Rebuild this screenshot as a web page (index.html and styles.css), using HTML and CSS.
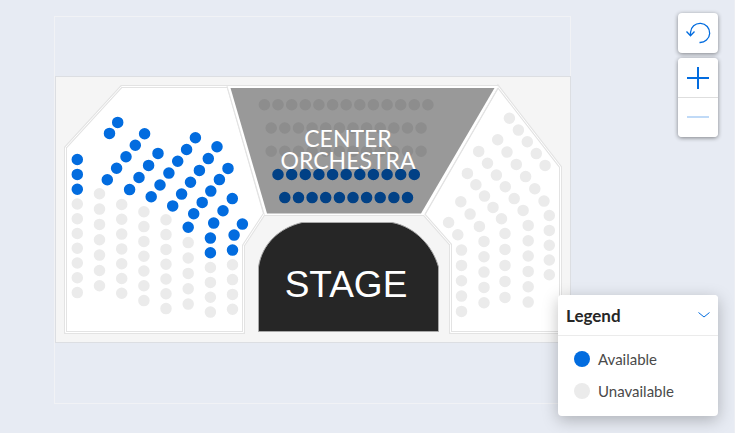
FILE: index.html
```html
<!DOCTYPE html>
<html lang="en">
<head>
<meta charset="utf-8">
<meta name="viewport" content="width=device-width, initial-scale=1">
<title>Seat map</title>
<link rel="stylesheet" href="styles.css">
</head>
<body>
<main class="viewer">
  <svg class="map" viewBox="0 0 735 433" role="img" aria-label="Venue seat map">
    <rect class="frame" x="54.5" y="16.5" width="516" height="387"/>
    <rect class="venue" x="55.5" y="76.5" width="515" height="266"/>

    <!-- side sections: a wide grey outline with a white one inside it -->
    <g class="section-edge">
      <path id="left" d="M65.5 147.5L121.5 86.5H228L264.5 213.5L243.5 245.5V332.5H65.5Z"/>
      <path id="right" d="M498 86.5L560.5 167V332.5H450.5V244.5L424 214.5Z"/>
    </g>
    <g class="section-fill">
      <use href="#left"/>
      <use href="#right"/>
    </g>

    <!-- centre section -->
    <path class="center-gap" d="M227 86H498L424 215H265Z"/>
    <path class="center-line" d="M226 85.5H498M264 215.5H424M227 86L264 214M498 88L425 214"/>
    <path class="center" d="M230.5 88H494.5L421 213.5H267Z"/>

    <path class="stage" d="M258.5 331.5V267C262 244 279 228 302 222.5H392C416 227 433 247 438.5 267V331.5Z"/>
    <text class="stage-label" x="346" y="297">STAGE</text>

    <g class="seats available" stroke-width="11.5">
      <path d="M77.3 159.5h0M77.3 174.4h0M77.3 189.2h0M117.7 122.4h0M109.5 133.4h0"/>
      <path d="M144.6 133.7h0M135.3 145.3h0M126 156.7h0M116.6 168.3h0M107.3 179.8h0"/>
      <path d="M158 153.4h0M148.6 165.4h0M139 177.5h0M129.6 189.6h0"/>
      <path d="M195.4 137.7h0M186.6 149.5h0M177.7 161.3h0M168.9 173.1h0M160 185h0M151.2 196.8h0"/>
      <path d="M217 146.8h0M208.3 158.6h0M199.4 170.4h0M190.5 182.3h0M181.6 194.1h0M172.7 205.9h0"/>
      <path d="M228 168.4h0M219.4 179.6h0M210.8 191.1h0M202.2 202.4h0M193.7 213.8h0M188.2 227.3h0"/>
      <path d="M232.3 198.6h0M223 210.8h0M213.7 223.1h0M210.4 238.1h0M210.4 252.8h0"/>
      <path d="M242.4 224.1h0M234.1 235.1h0M232.5 250.1h0"/>
    </g>
    <g class="seats unavailable" stroke-width="11.5">
      <path d="M77.3 204h0M77.3 218.7h0M77.3 233.5h0M77.3 248.3h0M77.3 263h0M77.3 277.8h0M77.3 292.6h0"/>
      <path d="M99.5 193.7h0M99.5 209.1h0M99.5 224.4h0M99.5 239.8h0M99.5 255.1h0M99.5 270.5h0M99.5 285.8h0"/>
      <path d="M121.7 204.5h0M121.7 219.3h0M121.7 234.1h0M121.7 248.9h0M121.7 263.7h0M121.7 278.5h0M121.7 293.3h0"/>
      <path d="M143.9 211.8h0M143.9 226.6h0M143.9 241.4h0M143.9 256.2h0M143.9 271h0M143.9 285.8h0M143.9 300.6h0"/>
      <path d="M166 219.8h0M166 234.6h0M166 249.4h0M166 264.2h0M166 279h0M166 293.8h0M166 308.6h0"/>
      <path d="M188.2 242.6h0M188.2 258h0M188.2 273.4h0M188.2 288.7h0M188.2 304.1h0"/>
      <path d="M210.4 267.5h0M210.4 282.4h0M210.4 297.3h0M210.4 312.1h0"/>
      <path d="M232.5 264.8h0M232.5 279.6h0M232.5 294.4h0M232.5 309.2h0"/>

      <path d="M509.4 118.3h0M518.4 130.1h0M527.3 141.8h0M536.3 153.6h0M545.1 165.4h0"/>
      <path d="M497.7 139.8h0M507 152.1h0M516.3 164.4h0M525.6 176.6h0M534.8 188.8h0M544 201.1h0"/>
      <path d="M549.3 215.5h0M549.3 230.4h0M549.3 245.2h0M549.3 260h0M549.3 274.7h0"/>
      <path d="M478.7 151.4h0M487.5 163.3h0M496.4 175.1h0M505.3 186.8h0M514.2 198.6h0M523.1 210.4h0"/>
      <path d="M528.2 225.4h0M528.2 240.7h0M528.2 256h0M528.2 271.4h0M528.2 286.7h0M528.2 302.1h0"/>
      <path d="M467.4 173.4h0M475.9 184.7h0M484.5 196.1h0M493 207.4h0M501.5 218.7h0"/>
      <path d="M505 233.5h0M505 249.4h0M505 265.4h0M505 281.4h0M505 297.4h0"/>
      <path d="M460.8 201.7h0M470.1 214.1h0M479.4 226.4h0"/>
      <path d="M484 241.4h0M484 256.7h0M484 272.1h0M484 287.4h0M484 302.7h0"/>
      <path d="M448.6 222.5h0M457.8 234.7h0"/>
      <path d="M461.5 250.1h0M461.5 265.4h0M461.5 280.7h0M461.5 296.1h0M461.5 311.4h0"/>
    </g>
    <g class="seats center-unavailable" stroke-width="11.5">
      <path d="M264.4 104.8h0M278 104.8h0M291.7 104.8h0M305.3 104.8h0M318.9 104.8h0M332.6 104.8h0M346.2 104.8h0M359.8 104.8h0M373.4 104.8h0M387.1 104.8h0M400.7 104.8h0M414.3 104.8h0M427.9 104.8h0"/>
      <path d="M271.2 128h0M284.8 128h0M298.5 128h0M312.1 128h0M325.7 128h0M339.4 128h0M353 128h0M366.6 128h0M380.2 128h0M393.9 128h0M407.5 128h0M421.1 128h0"/>
      <path d="M271.2 151.3h0M284.8 151.3h0M298.5 151.3h0M312.1 151.3h0M325.7 151.3h0M339.4 151.3h0M353 151.3h0M366.6 151.3h0M380.2 151.3h0M393.9 151.3h0M407.5 151.3h0M421.1 151.3h0"/>
    </g>
    <g class="seats center-available" stroke-width="11.5">
      <path d="M278 174.5h0M291.7 174.5h0M305.3 174.5h0M318.9 174.5h0M332.6 174.5h0M346.2 174.5h0M359.8 174.5h0M373.4 174.5h0M387.1 174.5h0M400.7 174.5h0M414.3 174.5h0"/>
      <path d="M284.8 197.6h0M298.5 197.6h0M312.1 197.6h0M325.7 197.6h0M339.4 197.6h0M353 197.6h0M366.6 197.6h0M380.2 197.6h0M393.9 197.6h0M407.5 197.6h0"/>
    </g>
    <text class="center-label" x="348" y="147">CENTER</text>
    <text class="center-label" x="348" y="169">ORCHESTRA</text>
  </svg>

  <div class="controls">
    <button class="control" type="button" aria-label="Reset view">
      <svg width="40" height="40" viewBox="0 0 40 40">
        <path class="thin" stroke-width="1.3" d="M12.5 22.500V19.500A9.600 9.600 0 1 1 21.500 29.500M8.500 18.500L12.500 22.700L16.500 18.500"/>
      </svg>
    </button>
    <div class="zoom">
      <button class="control" type="button" aria-label="Zoom in">
        <svg width="40" height="39" viewBox="0 0 40 39"><path class="thick" d="M9 20H31M20 9V31"/></svg>
      </button>
      <button class="control" type="button" aria-label="Zoom out" disabled>
        <svg width="40" height="39" viewBox="0 0 40 39"><path class="thick" d="M9 19H31"/></svg>
      </button>
    </div>
  </div>

  <section class="legend">
    <button class="legend-head" type="button" aria-expanded="true">
      <span>Legend</span>
      <svg width="12" height="8" viewBox="0 0 12 8"><path class="thin" d="M0.500 1.500L6 6L11.500 1.500"/></svg>
    </button>
    <ul class="legend-list">
      <li><i class="dot"></i>Available</li>
      <li><i class="dot dot-off"></i>Unavailable</li>
    </ul>
  </section>
</main>
</body>
</html>
```
FILE: styles.css
```css
* { box-sizing: border-box; }

body {
  margin: 0;
  font-family: Lato, "Open Sans", sans-serif;
  color: #262626;
}

.viewer {
  position: relative;
  min-height: 100vh;
  background: #e7ebf3;
  border-right: 1px solid #eceef3;
  overflow: hidden;
}

.map {
  display: block;
  width: calc(100% + 1px);
}

.frame { fill: none; stroke: #f1f2f5; }
.venue { fill: #f5f5f5; stroke: #dcdee2; }

.section-edge { fill: #fff; stroke: #e3e3e3; stroke-width: 3; }
.section-fill { fill: none; stroke: #fff; stroke-width: 1; }

.center-gap { fill: #fff; }
.center-line { fill: none; stroke: #e3e3e3; }
.center { fill: #999; }

.stage { fill: #262626; stroke: #a8a8a8; }
.stage-label {
  font: 37px "Liberation Sans", Arial, sans-serif;
  fill: #fff;
  text-anchor: middle;
}
.center-label {
  font-size: 23px;
  fill: #fff;
  text-anchor: middle;
}

.seats { fill: none; stroke-linecap: round; }
.available { stroke: #026cdf; }
.unavailable { stroke: #ebebeb; }
.center-unavailable { stroke: #8d8d8d; }
.center-available { stroke: #014186; }

button {
  margin: 0;
  padding: 0;
  border: 0;
  background: #fff;
  font: inherit;
  color: inherit;
  cursor: pointer;
}

.controls {
  position: absolute;
  top: 13px;
  right: 16px;
  display: flex;
  flex-direction: column;
  gap: 5px;
}
.controls > * {
  border-radius: 4px;
  box-shadow: 0 1px 4px rgba(0, 0, 0, 0.45);
  overflow: hidden;
}
.control { display: block; width: 40px; }
.control svg { display: block; }
.control + .control { border-top: 1px solid #dedede; }
.control:disabled path { opacity: 0.25; }

.thin, .thick { fill: none; stroke: #026cdf; }
.thick { stroke-width: 2; }

.legend {
  position: absolute;
  right: 16px;
  bottom: 17px;
  width: 160px;
  background: #fff;
  border-radius: 4px;
  box-shadow: 0 4px 16px rgba(0, 0, 0, 0.25);
  overflow: hidden;
}
.legend-head {
  display: flex;
  align-items: center;
  justify-content: space-between;
  width: 100%;
  height: 41px;
  padding: 0 8px;
  border-bottom: 1px solid #ebebeb;
  font-size: 17px;
  font-weight: 700;
}
.legend-list {
  margin: 0;
  padding: 7px 16px 9px;
  list-style: none;
  font-size: 15px;
  color: #4a4a4a;
}
.legend-list li {
  display: flex;
  align-items: center;
  gap: 8px;
  height: 32px;
}
.dot {
  width: 16px;
  height: 16px;
  border-radius: 50%;
  background: #026cdf;
}
.dot-off { background: #ebebeb; }
```
